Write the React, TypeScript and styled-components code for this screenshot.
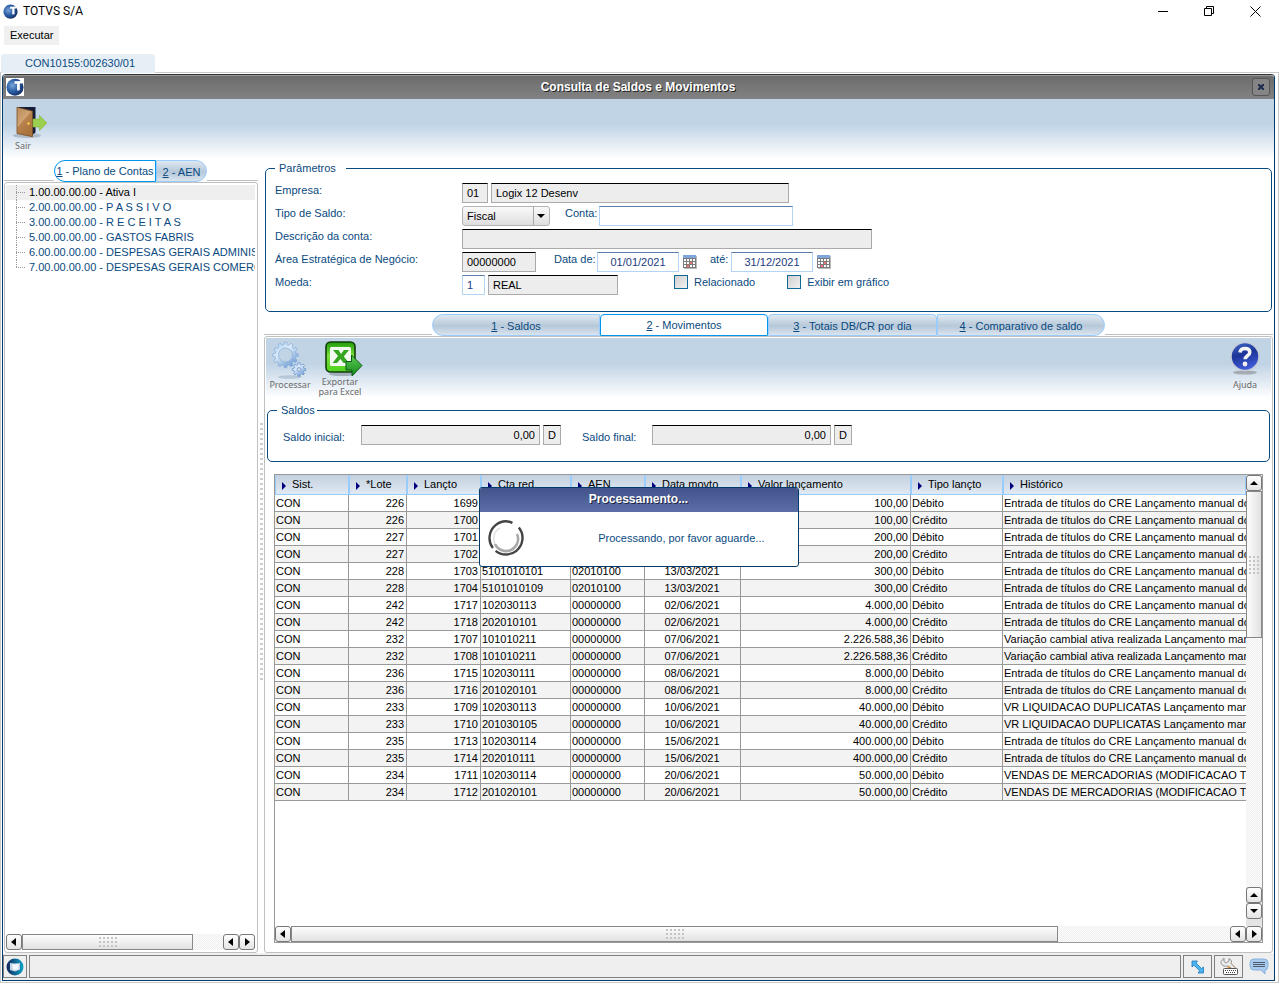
import React from "react";
import styled, { createGlobalStyle, css } from "styled-components";

const NAVY = "#003b6b";
const INK = "#0a4a80";
const LINE = "#c0c0c0";
const GRID = "#999999";

const GlobalStyle = createGlobalStyle`
  *, *::before, *::after { box-sizing: border-box; }
  body { margin: 0; background: #fff; }
  body, button, input, select, table { font-family: "Liberation Sans", Arial, sans-serif; font-size: 11px; color: ${INK}; }
  button { border: 0; padding: 0; margin: 0; background: none; }
  svg { display: block; flex: none; }
`;

/* Desktop shell */
const Shell = styled.div`
  display: flex;
  flex-direction: column;
  min-height: 100vh;
  padding: 0 1px 1px 0;
`;
const SystemBar = styled.header`
  display: flex;
  align-items: center;
  height: 22px;
  padding: 0 1px 0 3px;
`;
const SystemTitle = styled.h1`
  flex: 1;
  margin: 0 0 0 5px;
  font: 400 12px/22px Roboto, "Open Sans", sans-serif;
  color: #000;
`;
const SystemButton = styled.button`
  display: flex;
  align-items: center;
  justify-content: center;
  width: 46px;
  height: 22px;
`;
const MenuBar = styled.nav`
  display: flex;
  padding: 4px 4px 9px;
`;
const MenuButton = styled.button`
  height: 19px;
  padding: 0 6px 2px;
  background: #f0f0f0;
  color: #000;
`;
const SessionTab = styled.div`
  width: 154px;
  height: 19px;
  margin: 0 0 -1px 1px;
  padding-left: 24px;
  border-radius: 3px 3px 0 0;
  background: #e7eff6;
  line-height: 19px;
  z-index: 1;
`;
const Frame = styled.div`
  display: flex;
  flex: 1;
  padding: 1px 3px 1px 1px;
  border: 1px solid #c8c8c8;
`;

/* Application window */
const AppWindow = styled.section`
  position: relative;
  display: flex;
  flex: 1;
  flex-direction: column;
  min-width: 0;
  border: 1px solid ${NAVY};
  border-top-color: #333;
  border-radius: 4px 4px 0 0;
`;
const WindowBar = styled.div`
  display: flex;
  align-items: center;
  height: 24px;
  padding: 0 4px 2px 3px;
  border-top: 1px solid #999;
  border-radius: 3px 3px 0 0;
  background: linear-gradient(#6c6c6c, #828282);
`;
const WindowTitle = styled.h2`
  flex: 1;
  margin: 0;
  text-align: center;
  font-size: 12px;
  font-weight: 700;
  line-height: 14px;
  color: #fff;
  text-shadow: 1px 1px 0 #222;
`;
const LogoTile = styled.span`
  background: #fff;
`;
const CloseButton = styled.button`
  display: flex;
  align-items: center;
  justify-content: center;
  width: 18px;
  height: 18px;
  border: 1px solid #555;
  border-radius: 3px;
  background: #858585;
`;
const toolbarFill = css`
  background: linear-gradient(#c1d4e6 0, #c1d4e6 26px, #fff 60px) no-repeat;
`;
const WindowBody = styled.div`
  display: flex;
  flex: 1;
  flex-direction: column;
  ${toolbarFill}
`;
const MainToolbar = styled.div`
  display: flex;
  height: 60px;
  padding: 7px 10px 0;
`;
const ToolButton = styled.button<{ $icon: number; $width: number; $align?: string }>`
  display: grid;
  grid-template-rows: ${(p) => p.$icon}px auto;
  align-content: start;
  justify-items: ${(p) => p.$align ?? "center"};
  width: ${(p) => p.$width}px;
  font-family: "Noto Sans", "Open Sans", sans-serif;
  font-size: 9px;
  line-height: 10px;
  color: #6b6b6b;
  white-space: nowrap;
`;
const ToolCaption = styled.span`
  padding: 0 2px;
`;
const Columns = styled.div`
  display: flex;
  flex: 1;
  padding: 0 1px;
`;
const Sidebar = styled.aside`
  display: flex;
  flex-direction: column;
  width: 254px;
  padding-top: 1px;
`;
const Splitter = styled.div`
  display: flex;
  align-items: center;
  justify-content: center;
  width: 6px;
`;
const SplitterGrip = styled.div`
  width: 3px;
  height: 257px;
  margin-bottom: 10px;
  background: repeating-linear-gradient(#ccc 0 2px, transparent 2px 5px);
`;
const Content = styled.main`
  display: flex;
  flex: 1;
  flex-direction: column;
  min-width: 0;
  padding-top: 3px;
`;

/* Tabs */
const TabStrip = styled.div.attrs({ role: "tablist" })`
  display: flex;
  height: 22px;
`;
const TabRule = styled.span<{ $width?: number }>`
  flex: ${(p) => (p.$width ? `0 0 ${p.$width}px` : "1")};
  margin-bottom: 1px;
  border-bottom: 1px solid ${LINE};
`;
const Tab = styled.button.attrs({ role: "tab" })<{ $width: number; $active?: boolean; $end?: "first" | "last" }>`
  width: ${(p) => p.$width}px;
  height: 22px;
  padding-top: ${(p) => (p.$active ? 0 : 2)}px;
  border: 1px solid ${(p) => (p.$active ? "#0095ee" : "#99ccff")};
  border-radius: ${(p) => (p.$end === "first" ? "11px 0 0 11px" : p.$end === "last" ? "0 11px 11px 0" : "4px 4px 0 0")};
  background: ${(p) => (p.$active ? "#fff" : "linear-gradient(#dfe8f0, #b6c8d9 55%, #dae4ee)")};
  color: ${INK};
  white-space: nowrap;
`;
const Panel = styled.div`
  display: flex;
  flex: 1;
  flex-direction: column;
  padding: 1px;
  border: 1px solid ${LINE};
  border-radius: 3px;
  background: #fff;
`;
const TreePanel = styled(Panel)`
  padding: 1px 2px 2px 1px;
`;

/* Account tree */
const Tree = styled.ul`
  flex: 1;
  margin: 0;
  padding: 1px 0 0;
  list-style: none;
  overflow: hidden;
`;
const TreeItem = styled.li<{ $selected?: boolean }>`
  display: flex;
  align-items: center;
  gap: 3px;
  height: 15px;
  padding-left: 10px;
  background: ${(p) => (p.$selected ? "#efefef" : "transparent")};
  color: ${(p) => (p.$selected ? "#000" : INK)};
  line-height: 15px;
  white-space: nowrap;
`;

/* Forms */
const Group = styled.fieldset`
  min-width: 0;
  margin: 0 1px 2px;
  padding: 9px 9px 16px;
  border: 1px solid #0a4a80;
  border-radius: 5px;
`;
const GroupLegend = styled.legend<{ $gap: number }>`
  height: 12px;
  padding: 0 ${(p) => p.$gap}px 0 4px;
  line-height: 12px;
`;
const FormRows = styled.div`
  display: grid;
  row-gap: 3px;
`;
const Row = styled.div`
  display: flex;
  align-items: flex-start;
  gap: 3px;
  height: 20px;
`;
const Label = styled.label<{ $width?: number; $before?: number }>`
  flex: none;
  width: ${(p) => (p.$width ? `${p.$width}px` : "auto")};
  margin-left: ${(p) => p.$before ?? 0}px;
  line-height: 14px;
  white-space: nowrap;
`;
const TextField = styled.input<{ $width: number; $align?: string }>`
  width: ${(p) => p.$width}px;
  height: 20px;
  margin: 0;
  padding: 0 4px;
  border: 1px solid #b3d4f5;
  border-top-color: #5b7ea8;
  background: #fff;
  color: #223a80;
  text-align: ${(p) => p.$align ?? "left"};
  outline: 0;
  &:read-only {
    border-color: #000 #aaa #aaa;
    background: #ededed;
    color: #000;
  }
`;
const SelectBox = styled.span`
  position: relative;
  width: 88px;
  height: 20px;
  svg { position: absolute; right: 0; top: 0; pointer-events: none; }
`;
const Select = styled.select`
  appearance: none;
  width: 100%;
  height: 20px;
  padding: 0 20px 0 4px;
  border: 1px solid #b4b4b4;
  border-radius: 3px;
  background: linear-gradient(#fafafa, #dedede);
  color: #000;
`;
const IconButton = styled.button`
  width: 15px;
  height: 20px;
  display: grid;
  place-items: center;
`;
const CheckLabel = styled.label<{ $before: number }>`
  display: flex;
  gap: 6px;
  margin-left: ${(p) => p.$before}px;
  line-height: 14px;
  white-space: nowrap;
`;
const CheckBox = styled.input.attrs({ type: "checkbox" })`
  appearance: none;
  width: 14px;
  height: 14px;
  margin: 0;
  border: 1px solid #0e6a94;
  background: linear-gradient(135deg, #cfcfcf, #f2f2f2);
`;

/* Movements */
const PanelBody = styled.div`
  display: flex;
  flex: 1;
  flex-direction: column;
  ${toolbarFill}
`;
const PanelToolbar = styled.div`
  display: flex;
  height: 66px;
  padding: 3px 6px 0 1px;
`;
const Spacer = styled.span`
  flex: 1;
`;
const BalanceGroup = styled(Group)`
  margin: 0 1px 12px;
  padding: 9px 9px 16px;
`;
const BalanceRow = styled(Row)`
  align-items: flex-end;
  margin-left: 6px;
`;
const BalanceLabel = styled(Label)`
  line-height: 16px;
`;
const GridFrame = styled.div`
  display: grid;
  flex: 1;
  grid-template-columns: minmax(0, 1fr) 16px;
  grid-template-rows: 1fr 16px;
  margin: 0 8px 8px;
  border: 1px solid ${GRID};
`;
const GridView = styled.div`
  overflow: hidden;
`;
const Table = styled.table`
  width: 100%;
  table-layout: fixed;
  border-collapse: separate;
  border-spacing: 0;
  color: #000;
`;
const HeadCell = styled.th`
  height: 20px;
  padding: 0 0 2px;
  border: 1px solid #99ccff;
  border-top: 0;
  background: linear-gradient(#c4d0de, #e0eaf4);
  font-weight: 400;
  text-align: left;
  white-space: nowrap;
`;
const HeadLabel = styled.span`
  display: flex;
  align-items: center;
  gap: 6px;
  height: 16px;
  padding-left: 6px;
  line-height: 16px;
  svg { margin-top: 4px; }
`;
const BodyRow = styled.tr`
  &:nth-child(even) { background: #f3f3f3; }
`;
const Cell = styled.td<{ $align?: string }>`
  height: 17px;
  padding: 0 ${(p) => (p.$align ? 2 : 0)}px 0 1px;
  border-right: 1px solid ${GRID};
  border-bottom: 1px solid ${GRID};
  line-height: 16px;
  text-align: ${(p) => p.$align ?? "left"};
  white-space: nowrap;
  overflow: hidden;
  &:last-child { border-right: 0; }
`;

/* Scroll bars */
const ScrollRail = styled.div<{ $vertical?: boolean; $span?: boolean; $corner?: boolean }>`
  display: flex;
  flex-direction: ${(p) => (p.$vertical ? "column" : "row")};
  ${(p) => (p.$vertical ? "width: 16px;" : "height: 16px;")}
  ${(p) => p.$span && "grid-column: 1 / -1;"}
  ${(p) => p.$corner && "padding-bottom: 7px; background: #e4e4e4;"}
`;
const ScrollArrow = styled.button`
  display: grid;
  place-items: center;
  flex: none;
  width: 16px;
  height: 16px;
  border: 1px solid #777;
  border-radius: 3px;
  background: linear-gradient(#fff, #e4e4e4);
`;
const ScrollThumb = styled.span<{ $share: number; $vertical?: boolean }>`
  display: grid;
  place-items: center;
  flex: ${(p) => p.$share} 0 0;
  border: 1px solid #888;
  background: linear-gradient(${(p) => (p.$vertical ? "90deg" : "180deg")}, #fdfdfd, #e2e2e2);
`;
const ScrollTrack = styled.span<{ $share: number }>`
  flex: ${(p) => p.$share} 0 0;
  background: repeating-conic-gradient(#ececec 0 25%, #fff 0 50%) 0 0 / 2px 2px;
`;

/* Status bar */
const StatusBar = styled.footer`
  display: flex;
  align-items: center;
  gap: 2px;
  height: 27px;
  padding-right: 1px;
  background: #efefef;
`;
const StatusButton = styled.button<{ $width: number; $flat?: boolean }>`
  display: grid;
  place-items: center;
  width: ${(p) => p.$width}px;
  height: 23px;
  border: ${(p) => (p.$flat ? "0" : "1px solid #808080")};
`;
const StatusField = styled.div`
  flex: 1;
  height: 23px;
  border: 1px solid #808080;
`;

/* Progress dialog */
const Overlay = styled.div`
  position: absolute;
  inset: 0;
  display: grid;
  place-items: center;
  padding-bottom: 2px;
`;
const Dialog = styled.div.attrs({ role: "dialog" })`
  width: 320px;
  border: 1px solid ${NAVY};
  border-radius: 3px;
  background: #fff;
`;
const DialogTitle = styled.h3`
  margin: 0;
  height: 24px;
  background: linear-gradient(#43548c, #5c6ea6);
  border-radius: 2px 2px 0 0;
  font-size: 12px;
  font-weight: 700;
  line-height: 23px;
  text-align: center;
  color: #fff;
  text-shadow: 1px 1px 0 #1d2544;
`;
const DialogBody = styled.div`
  display: flex;
  align-items: center;
  height: 54px;
  padding: 0 33px 2px 7px;
`;
const DialogText = styled.p`
  flex: 1;
  margin: 0;
  text-align: right;
`;

const Logo = ({ size }: { size: number }) => (
  <svg width={size} height={size} viewBox="0 0 18 18" aria-hidden="true">
    <defs>
      <radialGradient id="globe" cx="35%" cy="40%" r="70%">
        <stop offset="0" stopColor="#7aa5d8" />
        <stop offset="0.5" stopColor="#2c5ea6" />
        <stop offset="1" stopColor="#12295e" />
      </radialGradient>
    </defs>
    <circle cx="9" cy="9.200" r="8.500" fill="url(#globe)" />
    <path d="M8.500 3.200l7.500-.2v2.400l-2.200.1v6.800l-2.700.2V5.700l-2.600.1z" fill="#fff" />
  </svg>
);

const DoorIcon = () => (
  <svg width="36" height="34" viewBox="0 0 36 34" aria-hidden="true">
    <defs>
      <linearGradient id="wood" x1="0" y1="0" x2="0.6" y2="1">
        <stop offset="0" stopColor="#b98a5a" />
        <stop offset="0.5" stopColor="#d0a474" />
        <stop offset="0.52" stopColor="#b8834e" />
        <stop offset="1" stopColor="#a9713c" />
      </linearGradient>
    </defs>
    <ellipse cx="14" cy="29.500" rx="14" ry="2.500" fill="#8795a3" opacity="0.5" />
    <path d="M4 1h18.500v25.500L19 29z" fill="#141c36" />
    <path d="M4 1.200l15.500 4v25.500L4 27.500z" fill="url(#wood)" stroke="#7b4f25" strokeWidth="0.8" />
    <circle cx="15.500" cy="17.500" r="1.200" fill="#f7d64a" />
    <path d="M20 13h6.500V9.500l7.500 7.500-7.500 7.500V21H20z" fill="#9bcf4f" stroke="#86ba3a" strokeWidth="0.6" />
  </svg>
);

/* Outline of a toothed wheel with a round hole */
const gearPath = (cx: number, cy: number, outer: number, inner: number, hole: number, teeth: number) => {
  const points: string[] = [];
  for (let i = 0; i < teeth; i++) {
    [[-0.32, inner], [-0.2, outer], [0.2, outer], [0.32, inner]].forEach(([shift, r]) => {
      const a = ((i + shift) / teeth) * Math.PI * 2;
      points.push(`${(cx + r * Math.cos(a)).toFixed(2)} ${(cy + r * Math.sin(a)).toFixed(2)}`);
    });
  }
  return `M${points.join("L")}ZM${cx + hole} ${cy}a${hole} ${hole} 0 1 0 ${-2 * hole} 0a${hole} ${hole} 0 1 0 ${2 * hole} 0Z`;
};

const GearsIcon = () => (
  <svg width="36" height="38" viewBox="0 0 36 38" aria-hidden="true">
    <defs>
      <linearGradient id="steel" x1="0" y1="0" x2="0.7" y2="1">
        <stop offset="0" stopColor="#a9cdf0" />
        <stop offset="0.45" stopColor="#dcebf9" />
        <stop offset="1" stopColor="#6d9bd3" />
      </linearGradient>
    </defs>
    <ellipse cx="18" cy="36" rx="12" ry="1.800" fill="#8fa5ba" opacity="0.45" />
    <path d={gearPath(13.5, 14, 12.8, 10.4, 7, 12)} fill="url(#steel)" stroke="#86add9" strokeWidth="0.7" fillRule="evenodd" />
    <path d={gearPath(27, 28.5, 6.8, 5, 2, 8)} fill="url(#steel)" stroke="#7199cc" strokeWidth="0.8" fillRule="evenodd" />
  </svg>
);

const ExcelIcon = () => (
  <svg width="46" height="36" viewBox="-8 0 46 36" aria-hidden="true">
    <defs>
      <linearGradient id="lime" x1="0" y1="0" x2="0" y2="1">
        <stop offset="0" stopColor="#1f9a0a" />
        <stop offset="0.45" stopColor="#7be03a" />
        <stop offset="1" stopColor="#4fd31c" />
      </linearGradient>
      <linearGradient id="leaf" x1="0" y1="0" x2="0" y2="1">
        <stop offset="0" stopColor="#5bcb52" />
        <stop offset="1" stopColor="#168a1f" />
      </linearGradient>
    </defs>
    <ellipse cx="17" cy="33" rx="13" ry="2" fill="#6d7a88" opacity="0.5" />
    <rect x="1" y="1" width="29" height="30" rx="4.500" fill="url(#lime)" stroke="#123c0c" strokeWidth="1.600" />
    <rect x="5" y="6" width="21" height="19" rx="1.500" fill="#f3faf0" />
    <path d="M8 9h5.500l2.500 4 3-4h5l-5.200 6.500L24 22h-5.500l-3-4-3.500 4H7.500l5.500-7z" fill="#36a522" />
    <path d="M21 20.500h5.500V14L37 24.500 27 35v-6h-6z" fill="url(#leaf)" stroke="#0d5a14" strokeWidth="1" />
  </svg>
);

const HelpIcon = () => (
  <svg width="30" height="34" viewBox="0 0 30 34" aria-hidden="true">
    <defs>
      <linearGradient id="royal" x1="0" y1="0" x2="0.3" y2="1">
        <stop offset="0" stopColor="#4468cc" />
        <stop offset="0.5" stopColor="#1b3597" />
        <stop offset="1" stopColor="#3f58d8" />
      </linearGradient>
    </defs>
    <ellipse cx="15" cy="31.500" rx="12" ry="2" fill="#777" opacity="0.5" />
    <circle cx="15" cy="15.500" r="14" fill="url(#royal)" stroke="#c5ccd8" strokeWidth="1.500" />
    <path d="M10 11.500c.3-3 2.500-4 5-4 2.700 0 4.800 1.200 4.800 3.800 0 3.400-4.600 3.400-4.600 7" fill="none" stroke="#f4f4f4" strokeWidth="3.600" />
    <circle cx="15" cy="23" r="2.400" fill="#f0f0f0" />
  </svg>
);

const CalendarIcon = () => (
  <svg width="14" height="14" viewBox="0 0 14 14" aria-hidden="true">
    <path d="M1 1h13v13H1z" fill="#b9b9b9" />
    <path d="M0 0h13v13H0z" fill="#7b7b7b" />
    <path d="M0 0h13v3H0z" fill="#7ea6dc" />
    <path d="M1 4h2v2H1zM4 4h2v2H4zM7 4h2v2H7zM10 4h2v2h-2zM1 7h2v2H1zM4 7h2v2H4zM10 7h2v2h-2zM1 10h2v2H1zM7 10h2v2H7zM10 10h2v2h-2z" fill="#fff" />
    <path d="M7 7h2v2H7zM4 10h2v2H4z" fill="#f27070" />
  </svg>
);

const ARROWS = {
  left: "M6 0v8L1 4z",
  right: "M2 0v8l5-4z",
  up: "M0 6h8L4 2z",
  down: "M0 2h8L4 6z",
};
const Arrow = ({ to }: { to: keyof typeof ARROWS }) => (
  <ScrollArrow aria-label={to}>
    <svg width="8" height="8" viewBox="0 0 8 8"><path d={ARROWS[to]} fill="#000" /></svg>
  </ScrollArrow>
);

const Grip = ({ cols, rows }: { cols: number; rows: number }) => (
  <svg width={cols * 4} height={rows * 4} aria-hidden="true">
    {Array.from({ length: cols * rows }, (_, i) => (
      <rect key={i} x={(i % cols) * 4 + 1} y={Math.floor(i / cols) * 4 + 1} width="2" height="2" fill="#c4c4c4" />
    ))}
  </svg>
);

const Branch = ({ last }: { last: boolean }) => (
  <svg width="10" height="15" aria-hidden="true">
    <path d={`M.5 0v${last ? 8 : 15}M0 7.500h10`} stroke="#999" strokeDasharray="1 1" fill="none" />
  </svg>
);

const accounts = [
  "1.00.00.00.00 - Ativa I",
  "2.00.00.00.00 - P A S S I V O",
  "3.00.00.00.00 - R E C E I T A S",
  "5.00.00.00.00 - GASTOS FABRIS",
  "6.00.00.00.00 - DESPESAS GERAIS ADMINISTR",
  "7.00.00.00.00 - DESPESAS GERAIS COMERCIA",
];

const columns: { title: string; width?: number; align?: string }[] = [
  { title: "Sist.", width: 74 },
  { title: "*Lote", width: 58, align: "right" },
  { title: "Lançto", width: 74, align: "right" },
  { title: "Cta red.", width: 90 },
  { title: "AEN", width: 74 },
  { title: "Data movto", width: 96, align: "center" },
  { title: "Valor lançamento", width: 170, align: "right" },
  { title: "Tipo lançto", width: 92 },
  { title: "Histórico" },
];

const CRE = "Entrada de títulos do CRE Lançamento manual do s";
const CAMBIO = "Variação cambial ativa realizada Lançamento man";
const DUPL = "VR LIQUIDACAO DUPLICATAS Lançamento manua";
const VENDAS = "VENDAS DE MERCADORIAS (MODIFICACAO TEST";

const movements = [
  ["226", "1699", "", "", "", "100,00", "Débito", CRE],
  ["226", "1700", "", "", "", "100,00", "Crédito", CRE],
  ["227", "1701", "", "", "", "200,00", "Débito", CRE],
  ["227", "1702", "", "", "", "200,00", "Crédito", CRE],
  ["228", "1703", "5101010101", "02010100", "13/03/2021", "300,00", "Débito", CRE],
  ["228", "1704", "5101010109", "02010100", "13/03/2021", "300,00", "Crédito", CRE],
  ["242", "1717", "102030113", "00000000", "02/06/2021", "4.000,00", "Débito", CRE],
  ["242", "1718", "202010101", "00000000", "02/06/2021", "4.000,00", "Crédito", CRE],
  ["232", "1707", "101010211", "00000000", "07/06/2021", "2.226.588,36", "Débito", CAMBIO],
  ["232", "1708", "101010211", "00000000", "07/06/2021", "2.226.588,36", "Crédito", CAMBIO],
  ["236", "1715", "102030111", "00000000", "08/06/2021", "8.000,00", "Débito", CRE],
  ["236", "1716", "201020101", "00000000", "08/06/2021", "8.000,00", "Crédito", CRE],
  ["233", "1709", "102030113", "00000000", "10/06/2021", "40.000,00", "Débito", DUPL],
  ["233", "1710", "201030105", "00000000", "10/06/2021", "40.000,00", "Crédito", DUPL],
  ["235", "1713", "102030114", "00000000", "15/06/2021", "400.000,00", "Débito", CRE],
  ["235", "1714", "202010111", "00000000", "15/06/2021", "400.000,00", "Crédito", CRE],
  ["234", "1711", "102030114", "00000000", "20/06/2021", "50.000,00", "Débito", VENDAS],
  ["234", "1712", "201020101", "00000000", "20/06/2021", "50.000,00", "Crédito", VENDAS],
];

const Parameters = () => (
  <Group>
    <GroupLegend $gap={10}>Parâmetros</GroupLegend>
    <FormRows>
      <Row>
        <Label $width={184} htmlFor="empresa">Empresa:</Label>
        <TextField $width={26} id="empresa" defaultValue="01" readOnly />
        <TextField $width={298} aria-label="Nome da empresa" defaultValue="Logix 12 Desenv" readOnly />
      </Row>
      <Row>
        <Label $width={184} htmlFor="tipo">Tipo de Saldo:</Label>
        <SelectBox>
          <Select id="tipo"><option>Fiscal</option></Select>
          <svg width="17" height="20" aria-hidden="true">
            <path d="M.5 1v18" stroke="#a8a8a8" />
            <path d="M4 8h8l-4 4z" fill="#000" />
          </svg>
        </SelectBox>
        <Label $before={12} $width={31} htmlFor="conta">Conta:</Label>
        <TextField $width={194} id="conta" />
      </Row>
      <Row>
        <Label $width={184} htmlFor="descricao">Descrição da conta:</Label>
        <TextField $width={410} id="descricao" readOnly />
      </Row>
      <Row>
        <Label $width={184} htmlFor="area">Área Estratégica de Negócio:</Label>
        <TextField $width={74} id="area" defaultValue="00000000" readOnly />
        <Label $before={15} $width={40} htmlFor="de">Data de:</Label>
        <TextField $width={82} $align="center" id="de" defaultValue="01/01/2021" />
        <IconButton aria-label="Calendário inicial"><CalendarIcon /></IconButton>
        <Label $before={10} $width={18} htmlFor="ate">até:</Label>
        <TextField $width={82} $align="center" id="ate" defaultValue="31/12/2021" />
        <IconButton aria-label="Calendário final"><CalendarIcon /></IconButton>
      </Row>
      <Row>
        <Label $width={184} htmlFor="moeda">Moeda:</Label>
        <TextField $width={23} id="moeda" defaultValue="1" />
        <TextField $width={130} aria-label="Nome da moeda" defaultValue="REAL" readOnly />
        <CheckLabel $before={53}><CheckBox />Relacionado</CheckLabel>
        <CheckLabel $before={29}><CheckBox />Exibir em gráfico</CheckLabel>
      </Row>
    </FormRows>
  </Group>
);

const Movements = () => (
  <GridFrame>
    <GridView>
      <Table>
        <colgroup>
          {columns.map((c) => <col key={c.title} width={c.width} />)}
        </colgroup>
        <thead>
          <tr>
            {columns.map((c) => (
              <HeadCell key={c.title}>
                <HeadLabel>
                  <svg width="4" height="8" aria-hidden="true"><path d="M0 0l4 4-4 4z" fill="#000080" /></svg>
                  {c.title}
                </HeadLabel>
              </HeadCell>
            ))}
          </tr>
        </thead>
        <tbody>
          {movements.map((m) => (
            <BodyRow key={m[1]}>
              {["CON", ...m].map((v, i) => <Cell key={i} $align={columns[i].align}>{v}</Cell>)}
            </BodyRow>
          ))}
        </tbody>
      </Table>
    </GridView>
    <ScrollRail $vertical $corner>
      <Arrow to="up" />
      <ScrollThumb $share={146} $vertical><Grip cols={3} rows={5} /></ScrollThumb>
      <ScrollTrack $share={250} />
      <Arrow to="up" />
      <Arrow to="down" />
    </ScrollRail>
    <ScrollRail $span>
      <Arrow to="left" />
      <ScrollThumb $share={767}><Grip cols={5} rows={3} /></ScrollThumb>
      <ScrollTrack $share={172} />
      <Arrow to="left" />
      <Arrow to="right" />
    </ScrollRail>
  </GridFrame>
);

export default function App() {
  return (
    <>
      <GlobalStyle />
      <Shell>
        <SystemBar>
          <Logo size={15} />
          <SystemTitle>TOTVS S/A</SystemTitle>
          <SystemButton aria-label="Minimizar">
            <svg width="10" height="10"><path d="M0 5.500h10" stroke="#000" /></svg>
          </SystemButton>
          <SystemButton aria-label="Restaurar">
            <svg width="10" height="10"><path d="M.5 2.500h7v7h-7zM2.500 2.500v-2h7v7h-2" fill="none" stroke="#000" /></svg>
          </SystemButton>
          <SystemButton aria-label="Fechar">
            <svg width="11" height="11"><path d="M.5.500l10 10M10.500.500l-10 10" stroke="#000" /></svg>
          </SystemButton>
        </SystemBar>
        <MenuBar><MenuButton>Executar</MenuButton></MenuBar>
        <SessionTab>CON10155:002630/01</SessionTab>
        <Frame>
          <AppWindow>
            <WindowBar>
              <LogoTile><Logo size={18} /></LogoTile>
              <WindowTitle>Consulta de Saldos e Movimentos</WindowTitle>
              <CloseButton aria-label="Fechar janela">
                <svg width="6" height="6"><path d="M0 0l6 6M6 0L0 6" stroke="#1d2a4d" strokeWidth="2" /></svg>
              </CloseButton>
            </WindowBar>
            <WindowBody>
              <MainToolbar>
                <ToolButton $icon={35} $width={36} $align="start">
                  <DoorIcon />
                  <ToolCaption>Sair</ToolCaption>
                </ToolButton>
              </MainToolbar>
              <Columns>
                <Sidebar>
                  <TabStrip>
                    <TabRule $width={50} />
                    <Tab $width={102} $active $end="first"><u>1</u> - Plano de Contas</Tab>
                    <Tab $width={51} $end="last"><u>2</u> - AEN</Tab>
                    <TabRule />
                  </TabStrip>
                  <TreePanel>
                    <Tree>
                      {accounts.map((a, i) => (
                        <TreeItem key={a} $selected={i === 0}>
                          <Branch last={i === accounts.length - 1} />
                          {a}
                        </TreeItem>
                      ))}
                    </Tree>
                    <ScrollRail>
                      <Arrow to="left" />
                      <ScrollThumb $share={171}><Grip cols={5} rows={3} /></ScrollThumb>
                      <ScrollTrack $share={30} />
                      <Arrow to="left" />
                      <Arrow to="right" />
                    </ScrollRail>
                  </TreePanel>
                </Sidebar>
                <Splitter><SplitterGrip /></Splitter>
                <Content>
                  <Parameters />
                  <TabStrip>
                    <TabRule $width={168} />
                    <Tab $width={168} $end="first"><u>1</u> - Saldos</Tab>
                    <Tab $width={168} $active><u>2</u> - Movimentos</Tab>
                    <Tab $width={169}><u>3</u> - Totais DB/CR por dia</Tab>
                    <Tab $width={168} $end="last"><u>4</u> - Comparativo de saldo</Tab>
                    <TabRule />
                  </TabStrip>
                  <Panel>
                    <PanelBody>
                      <PanelToolbar>
                        <ToolButton $icon={39} $width={46}><GearsIcon />Processar</ToolButton>
                        <ToolButton $icon={36} $width={54}>
                          <ExcelIcon />
                          <span>Exportar<br />para Excel</span>
                        </ToolButton>
                        <Spacer />
                        <ToolButton $icon={39} $width={40}><HelpIcon />Ajuda</ToolButton>
                      </PanelToolbar>
                      <BalanceGroup>
                        <GroupLegend $gap={2}>Saldos</GroupLegend>
                        <BalanceRow>
                          <BalanceLabel $width={75} htmlFor="inicial">Saldo inicial:</BalanceLabel>
                          <TextField $width={179} $align="right" id="inicial" defaultValue="0,00" readOnly />
                          <TextField $width={18} aria-label="Natureza do saldo inicial" defaultValue="D" readOnly />
                          <BalanceLabel $before={18} $width={67} htmlFor="final">Saldo final:</BalanceLabel>
                          <TextField $width={179} $align="right" id="final" defaultValue="0,00" readOnly />
                          <TextField $width={18} aria-label="Natureza do saldo final" defaultValue="D" readOnly />
                        </BalanceRow>
                      </BalanceGroup>
                      <Movements />
                    </PanelBody>
                  </Panel>
                </Content>
              </Columns>
            </WindowBody>
            <StatusBar>
              <StatusButton $width={24} aria-label="Sistema">
                <svg width="18" height="18" viewBox="0 0 18 18">
                  <defs>
                    <linearGradient id="orb">
                      <stop offset="0" stopColor="#16265c" />
                      <stop offset="1" stopColor="#0aa3c6" />
                    </linearGradient>
                  </defs>
                  <circle cx="9" cy="9" r="8.500" fill="url(#orb)" />
                  <path d="M4 5l5 .5 5-.5v6.500l-5 2-5-1.500z" fill="#c3d3ea" />
                  <path d="M6 6.500l6.500-.5v5.500L7 12z" fill="#f4f8fd" />
                </svg>
              </StatusButton>
              <StatusField />
              <StatusButton $width={29} aria-label="Redimensionar">
                <svg width="14" height="14" viewBox="0 0 14 14">
                  <path d="M1 1h5.500L5 3l5.500 5.500 2-1.500v6H7l1.700-2.200L3 5.200 1 7z" fill="#4db4f2" stroke="#1b76bd" strokeWidth="0.800" />
                </svg>
              </StatusButton>
              <StatusButton $width={29} aria-label="Ferramentas">
                <svg width="20" height="19" viewBox="0 0 20 19">
                  <path d="M8 11l4-5 6 6z" fill="#f39a1e" />
                  <path d="M5 1v3.500L7 6l3-2V1.500c2.500 1 3 3.500 2 5l4 4-2 2-4.500-3.500C5 10 1.500 8 2 4.500z" fill="#ececec" stroke="#8a8a8a" strokeWidth="0.900" />
                  <rect x="4.500" y="11.500" width="14" height="6" rx="1" fill="#fff" stroke="#555" />
                  <path d="M6 13.500h11M7 15.500h10" stroke="#444" strokeDasharray="1 1" />
                </svg>
              </StatusButton>
              <StatusButton $width={28} $flat aria-label="Mensagens">
                <svg width="20" height="17" viewBox="0 0 20 17">
                  <path d="M5 1h10q4 0 4 4v3q0 4-3 4v4l-4-4H5q-4 0-4-4V5q0-4 4-4z" fill="#a8cbee" stroke="#86b0dd" />
                  <path d="M4 4.500h12M4 6.500h12M4 8.500h12" stroke="#4a5a6c" />
                </svg>
              </StatusButton>
            </StatusBar>
            <Overlay>
              <Dialog aria-label="Processamento">
                <DialogTitle>Processamento...</DialogTitle>
                <DialogBody>
                  <svg width="38" height="38" viewBox="0 0 38 38" aria-hidden="true">
                    <circle cx="19" cy="19" r="16.500" fill="none" stroke="#444" strokeWidth="2.400" strokeDasharray="48 4 43 8.600" transform="rotate(-39 19 19)" />
                    <path d="M30 15A12 12 0 0 1 8 25" fill="none" stroke="#aaa" strokeWidth="2.600" />
                    <path d="M8 25A12 12 0 0 1 13 9" fill="none" stroke="#e2e2e2" strokeWidth="1.500" />
                  </svg>
                  <DialogText>Processando, por favor aguarde...</DialogText>
                </DialogBody>
              </Dialog>
            </Overlay>
          </AppWindow>
        </Frame>
      </Shell>
    </>
  );
}
